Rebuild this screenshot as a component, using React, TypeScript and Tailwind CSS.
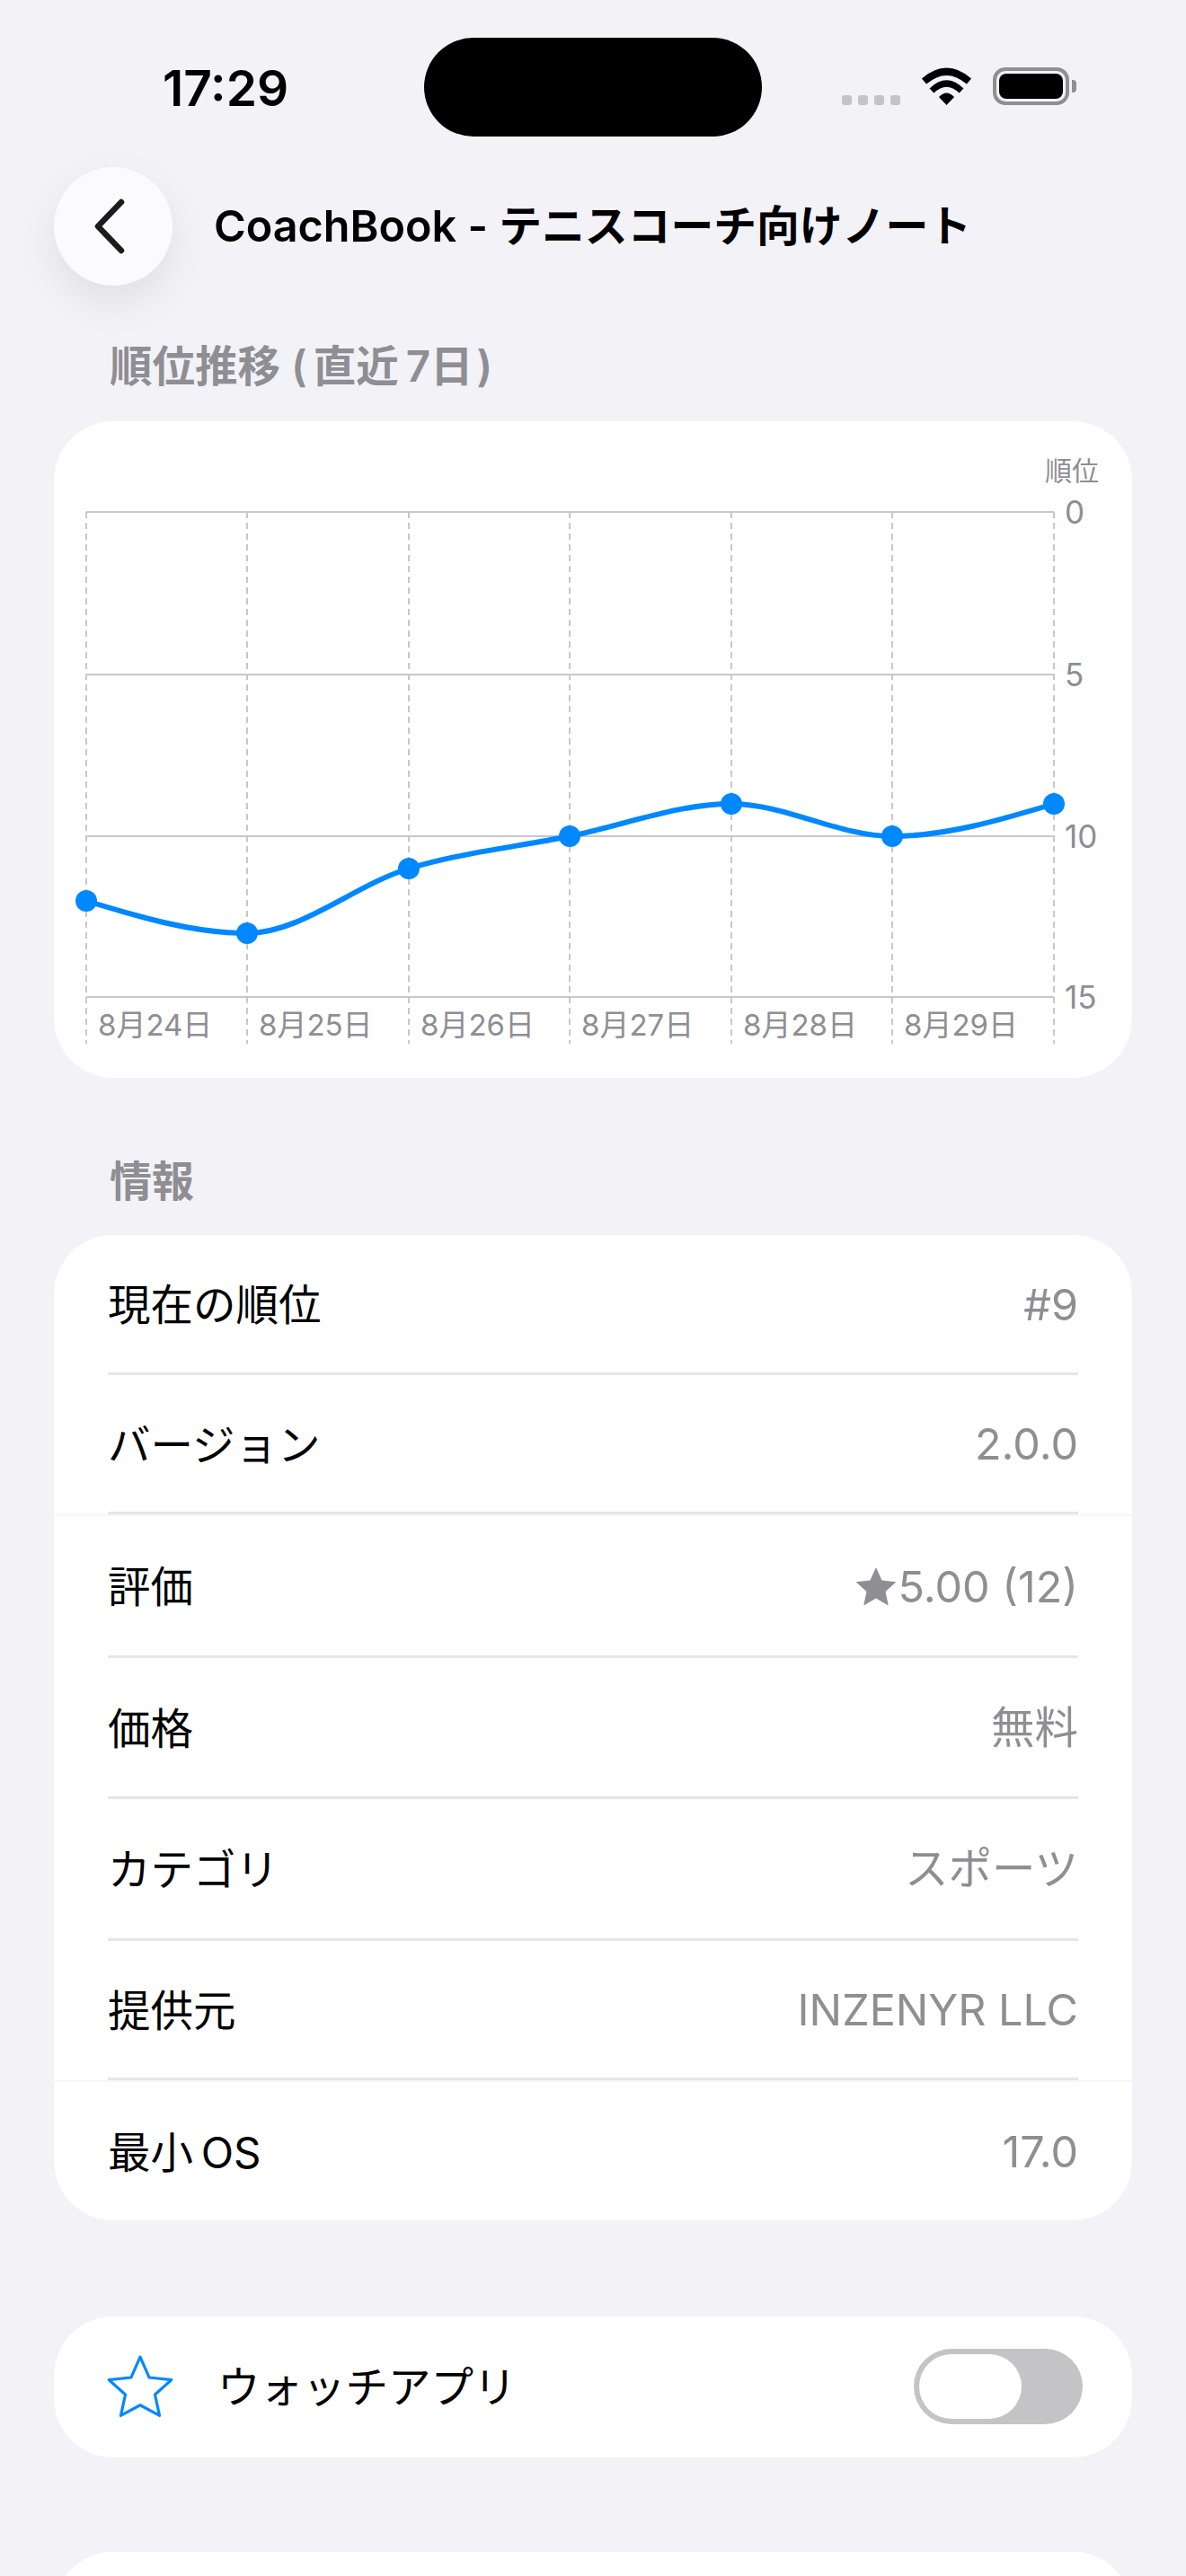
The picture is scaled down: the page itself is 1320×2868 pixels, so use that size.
const font = "font-['Inter','Noto_Sans_CJK_JP',sans-serif]"

const points = [
  [36, 534],
  [215, 570],
  [395, 498],
  [574, 462],
  [754, 426],
  [933, 462],
  [1113, 426],
]

// monotone cubic, same shape Swift Charts draws
function monotonePath(pts: number[][]) {
  const slopes = pts.slice(1).map((p, i) => (p[1] - pts[i][1]) / (p[0] - pts[i][0]))
  const tangents = pts.map((_, i) => {
    if (i === 0) return (3 * slopes[0] - (slopes[0] * slopes[1] > 0 ? slopes[0] : 0)) / 2
    if (i === pts.length - 1) return (3 * slopes[i - 1]) / 2
    const a = slopes[i - 1]
    const b = slopes[i]
    if (a * b <= 0) return 0
    return Math.sign(a) * 2 * Math.min(Math.abs(a), Math.abs(b), Math.abs(a + b) / 4)
  })
  let d = `M${pts[0][0]} ${pts[0][1]}`
  for (let i = 1; i < pts.length; i++) {
    const h = (pts[i][0] - pts[i - 1][0]) / 3
    d += ` C${pts[i - 1][0] + h} ${pts[i - 1][1] + tangents[i - 1] * h} ${pts[i][0] - h} ${pts[i][1] - tangents[i] * h} ${pts[i][0]} ${pts[i][1]}`
  }
  return d
}

const rows = [
  { label: "現在の順位", value: "#9", h: "h-[156px]" },
  { label: "バージョン", value: "2.0.0", h: "h-[157.4px]" },
  { label: "評価", value: "5.00 (12)", star: true, h: "h-[157.4px]" },
  { label: "価格", value: "無料", h: "h-[157.4px]" },
  { label: "カテゴリ", value: "スポーツ", h: "h-[157.4px]" },
  { label: "提供元", value: "INZENYR LLC", h: "h-[157.4px]" },
  { label: "最小\u2009OS", value: "17.0", h: "h-[154px]" },
]

const dates = ["8月24日", "8月25日", "8月26日", "8月27日", "8月28日", "8月29日"]
const gridX = points.map((p) => p[0])
const gridY = [101, 282, 462, 641]
const ranks = ["0", "5", "10", "15"]

function StatusBar() {
  return (
    <div className="flex items-start h-[186px]">
      <div className="w-[472px] pt-[66px] pl-[181px] text-[55px] leading-[64px] font-semibold text-black">17:29</div>
      <div className="mt-[42px] w-[376px] h-[110px] rounded-[55px] bg-black" />
      <div className="flex items-end gap-[23px] ml-[89px] mt-[75px]">
        <div className="flex gap-[7px]">
          <span className="w-[11px] h-[11px] rounded-[3px] bg-[#c4c4c8]" />
          <span className="w-[11px] h-[11px] rounded-[3px] bg-[#c4c4c8]" />
          <span className="w-[11px] h-[11px] rounded-[3px] bg-[#c4c4c8]" />
          <span className="w-[11px] h-[11px] rounded-[3px] bg-[#c4c4c8]" />
        </div>
        <svg width="57" height="42" viewBox="0 0 57 42">
          <path d="M3.5 15.5Q28.5 -6 53.5 15.5" fill="none" stroke="#000" strokeWidth="8" />
          <path d="M12 26Q28.5 10 45 26" fill="none" stroke="#000" strokeWidth="7" />
          <path d="M28.5 42L20 33Q28.5 24 37 33Z" fill="#000" />
        </svg>
        <div className="flex items-center gap-[3px]">
          <div className="w-[85px] h-[42px] rounded-[14px] border-[4px] border-[#8e8e93] p-[3px]">
            <div className="w-full h-full rounded-[8px] bg-black" />
          </div>
          <div className="w-[5px] h-[14px] rounded-r-[4px] bg-[#8e8e93]" />
        </div>
      </div>
    </div>
  )
}

function RankChart() {
  return (
    <div className="mx-[60px] h-[731px] rounded-[66px] bg-white overflow-hidden">
      <svg viewBox="0 0 1200 731" className="block w-full h-full">
        {gridX.map((x) => (
          <line key={x} x1={x} x2={x} y1={101} y2={693} stroke="#c7c7cc" strokeWidth="2" strokeDasharray="7 5" />
        ))}
        {gridY.map((y) => (
          <line key={y} x1={36} x2={1113} y1={y} y2={y} stroke="#c7c7cc" strokeWidth="2" />
        ))}
        <path d={monotonePath(points)} fill="none" stroke="#0088ff" strokeWidth="6" strokeLinecap="round" />
        {points.map((p) => (
          <circle key={p[0]} cx={p[0]} cy={p[1]} r="12" fill="#0088ff" />
        ))}
        {gridY.map((y, i) => (
          <text key={y} x={1125} y={y + 13} fontSize="35" fill="#8e8e93">{ranks[i]}</text>
        ))}
        <text x={1103} y={66} fontSize="30" fill="#8e8e93">順位</text>
        {dates.map((d, i) => (
          <text key={d} x={gridX[i] + 13} y={684} fontSize="33" fill="#8e8e93">{d}</text>
        ))}
      </svg>
    </div>
  )
}

export default function App() {
  return (
    <div className={`w-[1320px] h-[2868px] overflow-hidden bg-[#f2f2f7] ${font}`}>
      <StatusBar />

      <div className="flex items-center pl-[60px] h-[132px]">
        <button className="flex items-center justify-center w-[132px] h-[132px] rounded-full bg-[#fbfbfe] shadow-[0_18px_44px_rgba(0,0,0,0.08)]">
          <svg width="40" height="62" viewBox="0 0 40 62" className="-ml-[8px]">
            <path d="M33 4L7 31L33 58" fill="none" stroke="#1c1c1e" strokeWidth="6.5" strokeLinecap="round" strokeLinejoin="round" />
          </svg>
        </button>
        <span className="ml-[46px] text-[47.8px] leading-[60px] font-semibold text-black">
          <span className="text-[48.5px]">CoachBook - </span>テニスコーチ向けノート
        </span>
      </div>

      <div className="pl-[122px] pt-[62px] h-[151px] text-[47.5px] leading-[56px] font-semibold text-[#8e8e93]">
        順位推移 (<span className="ml-[7px]">直近</span><span className="ml-[8px]">7</span>日<span className="ml-[4px]">)</span>
      </div>
      <RankChart />

      <div className="pl-[122px] pt-[87px] h-[175px] text-[47px] leading-[56px] font-semibold text-[#8e8e93]">情報</div>
      <div className="mx-[60px] rounded-[66px] bg-white overflow-hidden">
        {rows.map((row, i) => (
          <div key={row.label} className={`${row.h} ${i === 1 || i === 5 ? "border-b-2 border-[#f5f5fa]" : ""}`}>
            <div className={`mx-[60px] h-full pt-[3px] flex items-center justify-between ${i < rows.length - 1 ? "border-b-[3px] border-[#e5e5ea]" : ""}`}>
              <span className="text-[47.5px] text-black">{row.label}</span>
              <span className="flex items-center text-[48.5px] text-[#8e8e93]">
                {row.star && (
                  <svg width="46" height="44" viewBox="0 0 24 23" className="mr-[2px] -mt-[2px]">
                    <path d="M12 .5l3.4 7.6 8.3.9-6.2 5.6 1.7 8.2L12 18.6l-7.2 4.2 1.7-8.2L.3 9l8.3-.9z" fill="#8e8e93" />
                  </svg>
                )}
                {row.value}
              </span>
            </div>
          </div>
        ))}
      </div>

      <div className="mt-[107px] mx-[60px] h-[157px] rounded-[66px] bg-white flex items-center pl-[58px] pr-[55px]">
        <svg width="76" height="72" viewBox="0 0 24 22.7">
          <path d="M12 1l3.2 7.2 7.8.8-5.8 5.2 1.6 7.4L12 17.9l-6.8 3.7 1.6-7.4L1 9l7.8-.8z" fill="none" stroke="#0088ff" strokeWidth="1" strokeLinejoin="round" />
        </svg>
        <span className="ml-[48px] text-[47.5px] text-black">ウォッチアプリ</span>
        <div className="ml-auto w-[188px] h-[84px] rounded-full bg-[#c4c4c6] p-[6px]">
          <div className="w-[114px] h-[72px] rounded-full bg-white" />
        </div>
      </div>

      <div className="mt-[105px] mx-[60px] h-[200px] rounded-[66px] bg-white" />
    </div>
  )
}
